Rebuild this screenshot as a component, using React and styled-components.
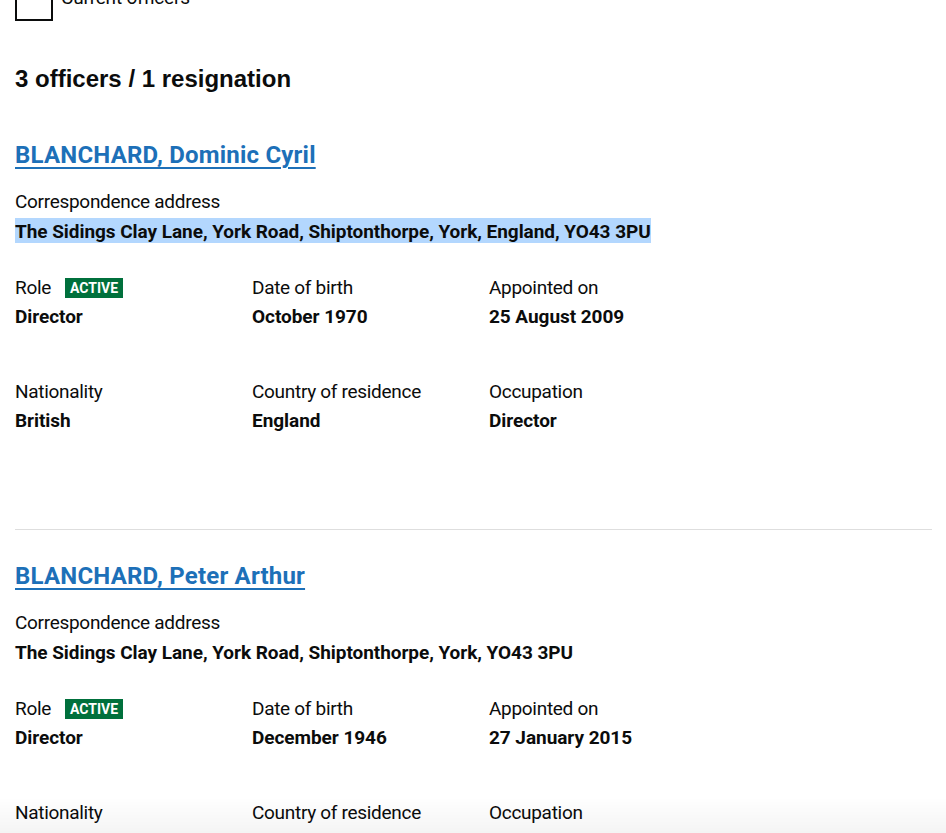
import React from "react";
import styled, { createGlobalStyle } from "styled-components";

const GlobalStyle = createGlobalStyle`
  html, body {
    margin: 0;
    padding: 0;
    background: #ffffff;
    color: #0b0c0c;
    font-family: Roboto, "Liberation Sans", Arial, sans-serif;
  }
`;

const Page = styled.main`
  padding: 0 14px 0 15px;
  overflow: hidden;
`;

const CheckboxRow = styled.label`
  display: flex;
  align-items: flex-start;
  gap: 8px;
  margin-top: -19px;
  font-size: 19px;
  line-height: 25px;
`;

const Box = styled.span`
  box-sizing: border-box;
  width: 38px;
  height: 40px;
  border: 2px solid #0b0c0c;
  flex-shrink: 0;
`;

const CheckLabel = styled.span`
  padding-top: 4px;
  letter-spacing: -0.2px;
`;

const Heading = styled.h2`
  margin: 43px 0 0;
  font-family: "Liberation Sans", Arial, sans-serif;
  font-weight: 700;
  font-size: 24px;
  line-height: 30px;
`;

const List = styled.div`
  margin-top: 46px;
`;

const Officer = styled.section`
  padding-bottom: ${(p) => (p.$last ? "0" : "96px")};
  margin-bottom: 31px;
  border-bottom: ${(p) => (p.$last ? "none" : "1px solid #dedede")};
`;

const Name = styled.a`
  display: inline-block;
  font-size: 24px;
  line-height: 30px;
  font-weight: 700;
  letter-spacing: 0.2px;
  color: #1d70b8;
  text-decoration: underline;
  text-decoration-thickness: 2px;
  text-underline-offset: 4px;
  cursor: pointer;
`;

const Label = styled.div`
  font-size: 19px;
  line-height: 25px;
  letter-spacing: -0.3px;
  display: flex;
  align-items: center;
  gap: 14px;
`;

const Value = styled.div`
  margin-top: 4px;
  font-size: 19px;
  line-height: 25px;
  font-weight: 700;
  letter-spacing: -0.05px;
`;

const Address = styled.div`
  margin-top: 19px;
`;

const AddressValue = styled(Value)`
  margin-top: 5px;
`;

const Selected = styled.span`
  background: ${(p) => (p.$selected ? "#b3d7fe" : "transparent")};
  padding: 2px 0 0;
`;

const Grid = styled.div`
  display: grid;
  grid-template-columns: repeat(3, 237px);
  row-gap: 50px;
  margin-top: 31px;
`;

const Tag = styled.span`
  display: inline-block;
  background: #00703c;
  color: #ffffff;
  font-weight: 700;
  font-size: 14px;
  line-height: 20px;
  padding: 0 5px;
  letter-spacing: 0;
`;

const BottomFade = styled.div`
  position: fixed;
  left: 0;
  right: 0;
  bottom: 0;
  height: 36px;
  background: linear-gradient(rgba(0, 0, 0, 0), rgba(0, 0, 0, 0.045));
  pointer-events: none;
`;

const officers = [
  {
    name: "BLANCHARD, Dominic Cyril",
    address: "The Sidings Clay Lane, York Road, Shiptonthorpe, York, England, YO43 3PU",
    selected: true,
    role: "Director",
    dob: "October 1970",
    appointed: "25 August 2009",
    nationality: "British",
    country: "England",
    occupation: "Director",
  },
  {
    name: "BLANCHARD, Peter Arthur",
    address: "The Sidings Clay Lane, York Road, Shiptonthorpe, York, YO43 3PU",
    role: "Director",
    dob: "December 1946",
    appointed: "27 January 2015",
    nationality: "British",
    country: "England",
    occupation: "Director",
  },
];

function Field({ label, value, tag }) {
  return (
    <div>
      <Label>
        {label}
        {tag && <Tag>{tag}</Tag>}
      </Label>
      <Value>{value}</Value>
    </div>
  );
}

export default function App() {
  return (
    <>
      <GlobalStyle />
      <Page>
        <CheckboxRow>
          <Box />
          <CheckLabel>Current officers</CheckLabel>
        </CheckboxRow>
        <Heading>3 officers / 1 resignation</Heading>
        <List>
          {officers.map((o, i) => (
            <Officer key={o.name} $last={i === officers.length - 1}>
              <Name>{o.name}</Name>
              <Address>
                <Label>Correspondence address</Label>
                <AddressValue>
                  <Selected $selected={o.selected}>{o.address}</Selected>
                </AddressValue>
              </Address>
              <Grid>
                <Field label="Role" value={o.role} tag="ACTIVE" />
                <Field label="Date of birth" value={o.dob} />
                <Field label="Appointed on" value={o.appointed} />
                <Field label="Nationality" value={o.nationality} />
                <Field label="Country of residence" value={o.country} />
                <Field label="Occupation" value={o.occupation} />
              </Grid>
            </Officer>
          ))}
        </List>
      </Page>
      <BottomFade />
    </>
  );
}
